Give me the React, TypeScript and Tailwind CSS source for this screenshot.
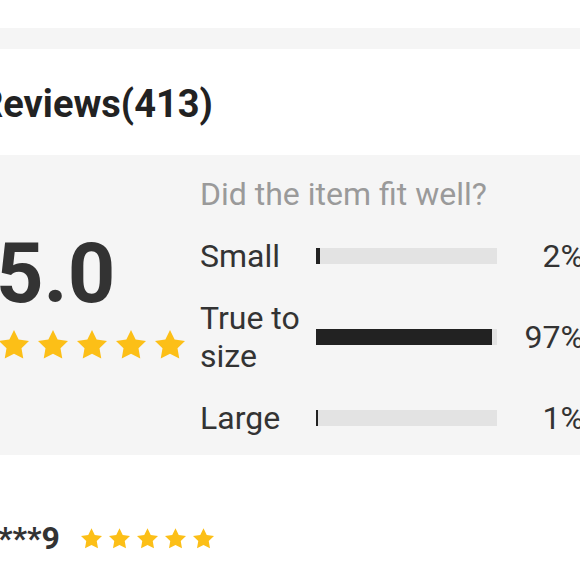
import React from 'react'

const FIT_ROWS = [
  { label: 'Small', pct: 2 },
  { label: 'True to size', pct: 97 },
  { label: 'Large', pct: 1 },
]

function Star({ className }: { className: string }) {
  return (
    <svg viewBox="2 2 20 19.3" className={className} fill="#fcbf17">
      <polygon points="12,2 15.09,8.26 22,9.27 17,14.14 18.18,21.02 12,17.77 5.82,21.02 7,14.14 2,9.27 8.91,8.26" />
    </svg>
  )
}

function Stars({ size, gap }: { size: string; gap: string }) {
  return (
    <div className={`flex ${gap}`}>
      {[0, 1, 2, 3, 4].map(i => (
        <Star key={i} className={size} />
      ))}
    </div>
  )
}

export default function App() {
  return (
    <div className="w-[580px] h-[580px] overflow-hidden bg-white font-['Roboto',sans-serif]">
      <div className="h-[28px] bg-white" />
      <div className="h-[21px] bg-[#f5f5f5]" />

      {/* header */}
      <div className="h-[106px] flex items-center pt-[4px]">
        <h2 className="ml-[-21px] text-[38px] font-bold text-[#222] whitespace-nowrap">Reviews(413)</h2>
      </div>

      {/* summary panel */}
      <div className="h-[300px] bg-[#f5f5f5] flex pt-[20px] pb-[19px]">
        <div className="w-[201px] shrink-0 ml-[-1px] pt-[57px] flex flex-col">
          <div className="ml-[-3px] text-[83px] leading-none font-bold text-[#333]">5.0</div>
          <div className="mt-[15px]">
            <Stars size="w-[30px] h-[29px]" gap="gap-[9px]" />
          </div>
        </div>
        <div className="flex-1 flex flex-col gap-6 text-[32px] leading-[38px]">
          <div className="text-[#9a9a9a] whitespace-nowrap">Did the item fit well?</div>
          {FIT_ROWS.map(row => (
            <div key={row.label} className="flex items-center">
              <div className="w-[116px] shrink-0 text-[#333] pr-2">{row.label}</div>
              <div className="w-[181px] h-[16px] bg-[#e3e3e3] shrink-0">
                <div className="h-full bg-[#222]" style={{ width: `${row.pct}%` }} />
              </div>
              <div className="w-[87px] shrink-0 text-right text-[#333]">{row.pct}%</div>
            </div>
          ))}
        </div>
      </div>

      {/* first review */}
      <div className="mt-[59px] flex items-center">
        <span className="ml-[-2px] text-[32px] font-bold text-[#333]">***9</span>
        <div className="ml-[21px]">
          <Stars size="w-[21px] h-[21px]" gap="gap-[7px]" />
        </div>
      </div>
    </div>
  )
}
